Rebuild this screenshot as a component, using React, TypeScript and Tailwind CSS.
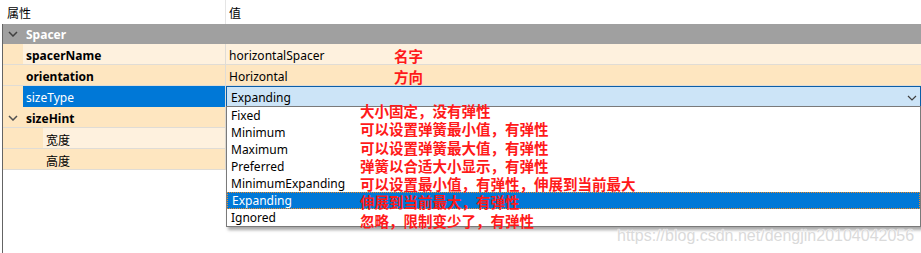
import React from "react";

const UI = { fontFamily: '"Noto Sans", "Noto Sans CJK SC", sans-serif' };
const CJK = { fontFamily: '"Noto Sans CJK SC", "Noto Sans", sans-serif' };

const LIGHT = "bg-[#fef1de]";
const DARK = "bg-[#fee6c0]";

function Chevron({ color }: { color: string }) {
  return (
    <svg width="10" height="6" viewBox="0 0 10 6" className="block">
      <path d="M1 1 L5 5 L9 1" fill="none" stroke={color} strokeWidth="1.5" />
    </svg>
  );
}

function Row({
  indent,
  rowBg,
  name,
  bold,
  value,
  chevron,
  cjk,
}: {
  indent: number;
  rowBg: string;
  name: string;
  bold?: boolean;
  value?: string;
  chevron?: boolean;
  cjk?: boolean;
}) {
  return (
    <div className="flex h-[21px] border-b border-[#e0dcd5]">
      <div className={`flex w-[222px] shrink-0 ${DARK}`}>
        <div className="flex items-center pl-[5px] pt-[2px]" style={{ width: indent }}>
          {chevron && <Chevron color="#505050" />}
        </div>
        <div
          className={`flex flex-1 items-center pl-[3px] pt-[3px] text-[12px] text-black ${
            chevron ? "" : rowBg
          } ${bold ? "font-bold" : ""}`}
          style={cjk ? CJK : UI}
        >
          {name}
        </div>
      </div>
      <div className="w-px shrink-0 bg-[#e0dcd5]" />
      <div className={`flex flex-1 items-center pl-[3px] pt-[3px] text-[12px] text-black ${rowBg}`} style={UI}>
        {value}
      </div>
    </div>
  );
}

const items = ["Fixed", "Minimum", "Maximum", "Preferred", "MinimumExpanding", "Expanding", "Ignored"];

const notes = [
  "大小固定，没有弹性",
  "可以设置弹簧最小值，有弹性",
  "可以设置弹簧最大值，有弹性",
  "弹簧以合适大小显示，有弹性",
  "可以设置最小值，有弹性，伸展到当前最大",
  "伸展到当前最大，有弹性",
  "忽略，限制变少了，有弹性",
];

export default function App() {
  return (
    <div className="relative h-[253px] w-[921px] overflow-hidden bg-white">
      {/* header */}
      <div className="flex h-[24px] text-[12px] text-black" style={CJK}>
        <div className="flex w-[225px] shrink-0 items-center pl-[7px] pt-[1px]">属性</div>
        <div className="w-px shrink-0 bg-[#e5e5e5]" />
        <div className="flex flex-1 items-center pl-[3px] pt-[1px]">值</div>
      </div>

      {/* body */}
      <div className="ml-[2px] h-[229px] border-l border-[#646464]">
        <div className="flex h-[20px] items-center bg-[#a0a0a0]">
          <div className="flex w-[23px] items-center pl-[5px]">
            <Chevron color="#404040" />
          </div>
          <div className="pt-[2px] text-[12px] font-bold text-white" style={UI}>
            Spacer
          </div>
        </div>
        <Row indent={20} rowBg={LIGHT} name="spacerName" bold value="horizontalSpacer" />
        <Row indent={20} rowBg={DARK} name="orientation" bold value="Horizontal" />
        {/* selected sizeType row with combo */}
        <div className="flex h-[21px]">
          <div className={`flex w-[222px] shrink-0 ${DARK}`}>
            <div className="w-[20px]" />
            <div className="flex flex-1 items-center bg-[#0078d7] pl-[3px] pt-[3px] text-[12px] text-white" style={UI}>
              sizeType
            </div>
          </div>
          <div className="w-px shrink-0 bg-[#e0dcd5]" />
          <div
            className="flex flex-1 items-center justify-between border border-[#0a5ea8] bg-[#cce4f7] pl-[4px] pr-[3px] pt-[2px] text-[12px] text-black"
            style={UI}
          >
            <span>Expanding</span>
            <svg width="10" height="6" viewBox="0 0 10 6">
              <path d="M1 1 L5 5 L9 1" fill="none" stroke="#404040" strokeWidth="1.2" />
            </svg>
          </div>
        </div>
        <Row indent={20} rowBg={DARK} name="sizeHint" bold chevron />
        <Row indent={40} rowBg={LIGHT} name="宽度" cjk />
        <Row indent={40} rowBg={DARK} name="高度" cjk />
      </div>

      {/* dropdown list */}
      <div className="absolute left-[226px] top-[106px] flex h-[121px] w-[695px] flex-col border border-[#7a7a7a] bg-white shadow-[2px_3px_3px_rgba(0,0,0,0.35)]">
        {items.map((it) => (
          <div
            key={it}
            className={`flex h-[17px] shrink-0 items-center pl-[4px] pt-[1px] text-[12px] ${
              it === "Expanding"
                ? "border border-dotted border-[#f08a24] bg-[#0078d7] pl-[3px] text-white"
                : "text-black"
            }`}
            style={UI}
          >
            {it}
          </div>
        ))}
      </div>

      {/* annotations */}
      <div className="absolute left-[394px] top-[46px] text-[14.5px] font-bold leading-[20px] text-[#ff1a1a]" style={CJK}>
        名字
      </div>
      <div className="absolute left-[394px] top-[67px] text-[14.5px] font-bold leading-[20px] text-[#ff1a1a]" style={CJK}>
        方向
      </div>
      <div className="absolute left-[360px] top-[102px] flex flex-col text-[14.5px] font-bold leading-[18.3px] text-[#ff1a1a]" style={CJK}>
        {notes.map((n) => (
          <div key={n} className="whitespace-nowrap">
            {n}
          </div>
        ))}
      </div>

      {/* watermark */}
      <div
        className="absolute left-[617px] top-[226px] whitespace-nowrap text-[16px] leading-[20px] text-[#dadada]"
        style={{
          fontFamily: '"Liberation Sans", Arial, sans-serif',
          textShadow: "0 0 1px #fff, 0 0 1px #fff",
        }}
      >
        https://blog.csdn.net/dengjin20104042056
      </div>
    </div>
  );
}
